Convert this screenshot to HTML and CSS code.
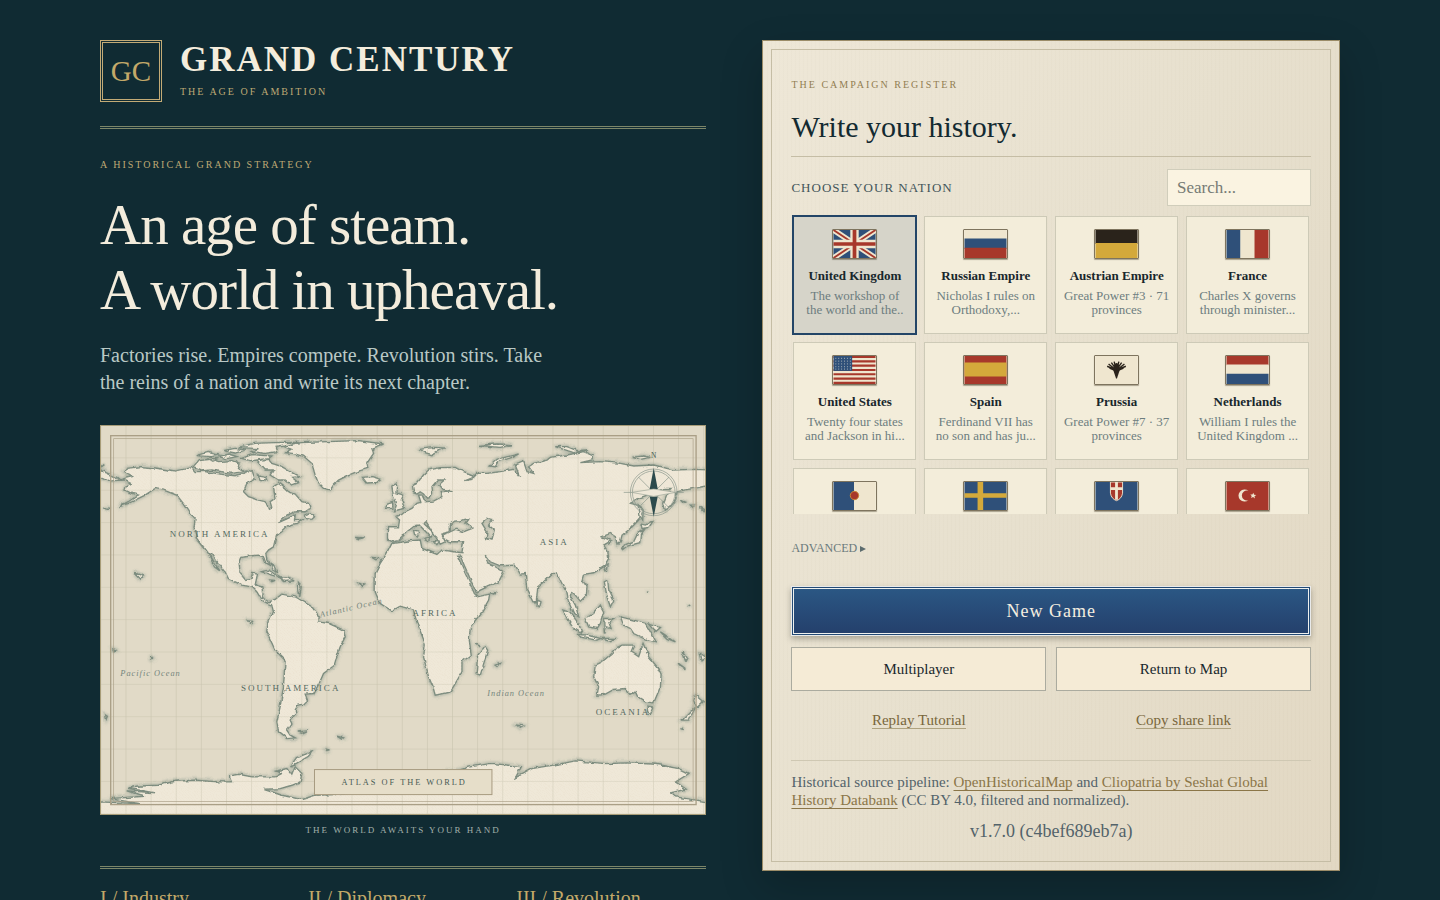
FILE: index.html
```html
<!DOCTYPE html>
<html lang="en">
<head>
<meta charset="utf-8">
<meta name="viewport" content="width=device-width, initial-scale=1">
<title>Grand Century</title>
<link rel="stylesheet" href="styles.css">
</head>
<body>
<main class="layout">
  <section class="intro">
    <header class="brand">
      <div class="monogram">GC</div>
      <div class="brand-text">
        <p class="brand-name">GRAND CENTURY</p>
        <p class="eyebrow">THE AGE OF AMBITION</p>
      </div>
    </header>
    <p class="eyebrow intro-eyebrow">A HISTORICAL GRAND STRATEGY</p>
    <h1 class="headline">An age of steam.<br>A world in upheaval.</h1>
    <p class="lede">Factories rise. Empires compete. Revolution stirs. Take<br>the reins of a nation and write its next chapter.</p>
    <figure class="atlas">
      <svg class="map" viewBox="18 18 1812 1164" role="img" aria-label="Atlas of the world">
        <defs>
          <pattern id="grid" x="19" y="18" width="75.3" height="97" patternUnits="userSpaceOnUse"><path class="grid-line" d="M75 0V97M0 97H75.3"/></pattern>
          <pattern id="hatch" width="9" height="9" patternUnits="userSpaceOnUse"><path class="hatch-line" d="M0 0L9 9"/></pattern>
          <filter id="coast" x="-2%" y="-2%" width="104%" height="104%"><feTurbulence type="fractalNoise" baseFrequency=".045" numOctaves="3" seed="4"/><feDisplacementMap in="SourceGraphic" scale="11" xChannelSelector="R" yChannelSelector="G"/></filter>
          <filter id="haze"><feGaussianBlur stdDeviation="5"/></filter>
          <g id="land">
            <path d="M85 155L100 145 138 140 180 144 240 153 290 143 300 155 330 155 380 163 420 167 448 160 455 150 472 155 480 178 455 190 445 215 460 230 490 240 510 245 520 268 530 262 525 245 540 235 535 200 550 190 570 205 580 215 600 222 620 245 640 250 645 265 630 275 600 275 575 285 550 308 572 298 600 285 598 302 622 300 610 310 590 312 575 320 560 335 545 345 540 360 535 380 520 390 512 400 515 420 522 435 513 430 505 410 490 405 470 407 440 412 432 430 435 460 450 478 468 475 472 460 487 462 480 495 500 500 505 535 520 545 540 538 560 522 600 530 625 545 650 560 672 590 670 605 700 610 745 630 750 650 735 680 728 700 718 735 685 760 672 790 655 820 630 822 637 840 625 852 608 855 600 870 602 880 585 900 590 910 575 930 585 945 600 953 575 955 550 935 545 905 555 860 565 800 570 720 540 690 515 635 520 610 535 575 530 555 515 548 500 540 485 515 470 500 440 495 400 475 390 455 370 430 350 400 343 402 365 440 374 452 358 440 340 400 325 380 305 355 297 325 300 295 285 280 265 250 245 225 210 212 180 205 165 215 150 225 130 235 100 250 70 260 100 245 130 225 110 220 90 210 95 195 110 190 90 180 70 180 110 170Z"/>
            <path d="M555 75L620 68 700 65 790 62 865 72 830 85 835 100 815 130 818 145 785 155 760 165 730 180 715 195 705 210 685 205 670 190 660 165 650 130 625 108 595 100 575 98 590 88Z"/>
            <path d="M485 122L520 118 530 130 560 140 590 158 612 170 590 172 610 188 590 195 570 180 550 180 525 165 535 150 510 150Z"/>
            <path d="M295 140L310 122 350 117 370 125 410 122 435 130 430 145 445 155 410 160 380 155 350 150 325 152Z"/>
            <path d="M305 107L340 97 370 105 350 110ZM370 110L400 102 425 110 395 116ZM385 92L420 85 450 90 420 99ZM440 115L470 104 530 108 520 116 465 122ZM430 82L480 70 540 68 610 67 570 78 540 82 545 95 510 100 470 94 490 86ZM340 117L370 115 350 124ZM490 165L510 168 515 180 495 178Z"/>
            <path d="M802 172L830 170 857 178 845 187 815 189Z"/>
            <path d="M628 285L645 278 658 290 650 298 630 295ZM500 455L520 450 555 470 540 468ZM555 473L580 475 597 482 565 484ZM525 480L540 481 530 485ZM525 430L540 440 548 455 532 444ZM118 457L145 467 137 477ZM15 150L65 172 75 180 40 184 15 172ZM25 264L45 264 35 267ZM15 138L28 138 20 142Z"/>
            <path d="M780 352L805 353 792 356ZM830 412L855 414 842 419ZM790 490L808 495 800 500ZM610 490L618 500 614 530 611 510ZM458 602L472 604 466 612ZM54 687L62 690 56 692ZM168 708L174 715 171 718ZM32 885L37 888 34 896ZM608 935L635 932 620 939ZM725 948L745 953 740 957ZM692 990L703 992 695 994ZM604 1012L650 995 640 1008 585 1040Z"/>
            <path d="M890 198L905 190 902 218 925 225 918 240 928 265 898 272 905 250 895 230ZM875 250L892 244 893 264 872 266Z"/>
            <path d="M15 1145L140 1151 45 1135 150 1128 95 1112 180 1118 100 1104 125 1098 190 1095 240 1083 300 1080 370 1085 412 1085 405 1067 430 1062 470 1070 540 1070 560 1060 542 1053 575 1045 590 1065 600 1040 620 1060 615 1085 590 1095 555 1105 505 1107 560 1125 620 1138 660 1125 745 1122 880 1090 1090 1050 1125 1040 1180 1030 1200 1030 1278 1040 1260 1073 1310 1045 1400 1030 1440 1022 1530 1030 1600 1028 1680 1032 1750 1045 1780 1060 1740 1085 1772 1107 1725 1118 1740 1130 1835 1145 1850 1200 0 1200Z"/>
            <g transform="translate(915 0)">
              <path fill-rule="evenodd" d="M-38 360L-38 320 -5 320 -2 300 -12 290 5 283 15 275 35 265 50 250 62 247 55 225 65 225 75 245 100 243 125 230 120 215 157 212 125 207 115 195 133 180 112 180 95 200 97 220 90 232 80 235 70 222 60 215 50 222 40 218 37 197 50 190 70 165 85 150 120 143 165 142 182 152 218 165 215 178 195 182 220 172 232 160 260 160 300 155 340 148 358 170 345 135 370 125 380 155 400 160 385 140 400 130 440 120 450 112 500 105 550 95 580 108 575 120 540 128 600 125 660 130 700 138 760 135 820 150 880 148 930 150 930 195 880 205 850 210 830 215 825 240 810 260 795 270 790 250 800 225 815 205 790 205 770 215 740 225 700 240 690 250 720 257 725 275 715 300 690 325 665 345 660 365 650 375 645 350 630 340 605 350 632 362 610 375 622 395 625 415 610 440 580 458 550 462 545 480 560 500 558 525 540 543 525 525 515 515 510 530 525 555 535 590 520 580 505 545 500 520 485 490 470 460 455 460 430 485 412 500 408 545 398 545 380 510 375 460 360 462 345 435 300 437 270 425 255 405 262 430 285 440 310 455 295 485 240 510 228 518 205 465 180 408 172 408 195 460 222 520 232 530 268 522 265 540 245 575 210 620 207 660 213 705 185 725 185 755 165 790 150 815 105 825 98 800 85 770 70 710 75 670 55 620 45 590 40 570 0 558 -25 572 -60 550 -75 515 -75 460 -60 430 -40 400 -25 370 -10 368 30 362 60 360 65 385 110 403 125 390 160 395 185 398 190 365 150 365 128 355 130 340 150 335 150 312 160 303 180 302 205 295 195 308 217 325 190 335 165 328 145 338 125 345 135 365 120 372 105 348 78 305 70 310 100 338 92 352 80 338 60 318 40 320 20 335 5 352 -5 362 -25 365ZM245 310L262 295 278 298 265 315 282 330 275 360 258 355 260 335Z"/>
              <path d="M270 138L290 118 355 102 335 112 295 125 285 140ZM60 88L100 82 130 84 115 92 95 104 75 98ZM235 76L290 72 335 74 300 82ZM465 80L500 80 530 92 560 90 520 98ZM695 112L730 108 750 112 720 118ZM40 330L55 333 52 348 43 343ZM72 355L88 352 85 362ZM100 362L118 362 110 374ZM412 540L422 545 418 560 410 558ZM717 255L728 270 727 300 718 285ZM722 312L735 315 760 300 745 322 725 325ZM735 325L720 345 718 368 680 378 665 390 672 375 700 365 712 340ZM612 440L620 435 618 455ZM612 485L622 480 625 510 640 540 630 560 620 530ZM270 518L288 518 280 522ZM840 240L856 246 850 250ZM870 258L880 258 874 262ZM900 262L912 268 908 272ZM740 512L744 514ZM860 560L872 555Z"/>
              <path d="M488 570L508 575 535 610 545 640 525 630 505 600ZM555 595L580 580 600 555 610 575 600 610 590 625 565 620ZM530 643L560 645 600 655 590 660 545 652ZM600 655L650 655 625 663ZM610 595L640 595 625 605 632 625 618 620 612 640ZM660 590L700 600 735 610 750 635 765 665 730 655 700 640 690 625 670 615ZM745 612L780 622 765 635ZM780 635L825 665 800 655Z"/>
              <path d="M665 675L700 675 692 695 715 710 728 670 745 710 770 740 782 765 780 800 760 848 735 845 712 830 705 815 690 825 675 805 640 808 615 822 590 825 595 800 580 770 585 735 605 725 635 700 650 682ZM740 858L758 860 750 880 742 875ZM885 825L908 845 890 862 880 842ZM885 862L865 900 845 900 870 875ZM255 680L262 690 240 765 228 760 232 710ZM285 735L300 730 292 740ZM350 915L370 918 360 924ZM225 672L240 680ZM845 695L860 712 855 722ZM832 728L855 745 845 742ZM900 700L918 712 905 722ZM840 925L850 928Z"/>
            </g>
          </g>
        </defs>
        <rect class="sea" x="15" y="15" width="1818" height="1170"/>
        <g filter="url(#coast)">
          <use href="#land" class="coast-haze" filter="url(#haze)"/>
          <use href="#land" class="land"/>
          <use href="#land" class="land-hatch"/>
        </g>
        <rect fill="url(#grid)" x="15" y="15" width="1818" height="1170"/>
        <rect class="frame" x="47" y="47" width="1755" height="1106"/>
        <rect class="frame frame-thin" x="56" y="56" width="1737" height="1088"/>
        <g transform="translate(1675 217)">
          <circle class="ring" r="70"/><circle class="ring" r="64"/>
          <path class="ring" d="M-90 0H90M-46-46L46 46M46-46L-46 46"/>
          <path class="needle" d="M0-73L12-10H-12ZM0 73L12 12H-12Z"/>
          <path class="needle-light" d="M-66 0L0-10 66 0 0 12Z"/>
          <text class="north" y="-103">N</text>
        </g>
        <g class="region">
          <text x="224" y="351">NORTH AMERICA</text><text x="438" y="811">SOUTH AMERICA</text>
          <text x="952" y="588">AFRICA</text><text x="1333" y="374">ASIA</text><text x="1501" y="884">OCEANIA</text>
        </g>
        <g class="ocean">
          <text x="76" y="767">Pacific Ocean</text><text x="1176" y="828">Indian Ocean</text>
          <text transform="translate(676 592) rotate(-13)">Atlantic Ocean</text>
        </g>
        <rect class="plate" x="658" y="1048" width="532" height="75"/>
        <text class="plate-text" x="927" y="1094">ATLAS OF THE WORLD</text>
      </svg>
      <figcaption class="caption">THE WORLD AWAITS YOUR HAND</figcaption>
    </figure>
    <ul class="pillars"><li>I / Industry</li><li>II / Diplomacy</li><li>III / Revolution</li></ul>
  </section>

  <section class="register">
    <p class="eyebrow register-eyebrow">THE CAMPAIGN REGISTER</p>
    <h2 class="register-title">Write your history.</h2>
    <div class="picker-head">
      <label for="search">CHOOSE YOUR NATION</label>
      <input id="search" class="search" type="search" placeholder="Search...">
    </div>
    <div class="nations">
      <button class="nation selected" type="button">
        <svg class="flag" viewBox="0 0 45 30"><path class="navy" d="M0 0H45V30H0Z"/><path stroke="#efe6cf" stroke-width="6" d="M0 0L45 30M45 0L0 30"/><path stroke="#a7382b" stroke-width="2" d="M0 0L45 30M45 0L0 30"/><path stroke="#efe6cf" stroke-width="9" d="M22.500 0V30M0 15H45"/><path stroke="#a7382b" stroke-width="4" d="M22.500 0V30M0 15H45"/></svg>
        <strong>United Kingdom</strong><span>The workshop of<br>the world and the..</span></button>
      <button class="nation" type="button">
        <svg class="flag" viewBox="0 0 45 30"><path class="cream" d="M0 0H45V10H0Z"/><path class="navy" d="M0 9H45V20H0Z"/><path class="red" d="M0 19H45V30H0Z"/></svg>
        <strong>Russian Empire</strong><span>Nicholas I rules on<br>Orthodoxy,...</span></button>
      <button class="nation" type="button">
        <svg class="flag" viewBox="0 0 45 30"><path class="black" d="M0 0H45V15H0Z"/><path class="gold" d="M0 14H45V30H0Z"/></svg>
        <strong>Austrian Empire</strong><span>Great Power #3 · 71<br>provinces</span></button>
      <button class="nation" type="button">
        <svg class="flag" viewBox="0 0 45 30"><path class="navy" d="M0 0H15V30H0Z"/><path class="cream" d="M15 0H30V30H15Z"/><path class="red" d="M30 0H45V30H30Z"/></svg>
        <strong>France</strong><span>Charles X governs<br>through minister...</span></button>
      <button class="nation" type="button">
        <svg class="flag" viewBox="0 0 45 30"><path class="cream" d="M0 0H45V30H0Z"/><path stroke="#a7382b" stroke-width="2.300" d="M0 1H45M0 5.700H45M0 10.300H45M0 15H45M0 19.600H45M0 24.200H45M0 28.800H45"/><path class="navy" d="M0 0H20V16H0Z"/><path stroke="#b9c0bf" stroke-dasharray="1 2.100" d="M2 2.500H19M2 5.500H19M2 8.500H19M2 11.500H19M2 14H19"/></svg>
        <strong>United States</strong><span>Twenty four states<br>and Jackson in hi...</span></button>
      <button class="nation" type="button">
        <svg class="flag" viewBox="0 0 45 30"><path class="red" d="M0 0H45V30H0Z"/><path class="gold" d="M0 7H45V22H0Z"/></svg>
        <strong>Spain</strong><span>Ferdinand VII has<br>no son and has ju...</span></button>
      <button class="nation" type="button">
        <svg class="flag" viewBox="0 0 45 30"><path class="cream" d="M0 0H45V30H0Z"/><path class="black" d="M20 10Q22.500 5 25 10L26 15 23 24H22L19 15Z"/><path fill="none" stroke="#2a231b" stroke-width="1.500" d="M22 15L12.500 11M22 15L14 8.500M22 14L17 7M22 14L20 6M23 15L32.500 11M23 15L31 8.500M23 14L28 7M23 14L25 6M22 16L15 13M23 16L30 13"/></svg>
        <strong>Prussia</strong><span>Great Power #7 · 37<br>provinces</span></button>
      <button class="nation" type="button">
        <svg class="flag" viewBox="0 0 45 30"><path class="red" d="M0 0H45V10H0Z"/><path class="cream" d="M0 9H45V20H0Z"/><path class="navy" d="M0 19H45V30H0Z"/></svg>
        <strong>Netherlands</strong><span>William I rules the<br>United Kingdom ...</span></button>
      <button class="nation" type="button" aria-label="Portugal">
        <svg class="flag" viewBox="0 0 45 30"><path class="navy" d="M0 0H22V30H0Z"/><path class="cream" d="M22 0H45V30H22Z"/><circle class="red" cx="22.500" cy="14.500" r="4.500" stroke="#c98a35"/></svg>
      </button>
      <button class="nation" type="button" aria-label="Sweden">
        <svg class="flag" viewBox="0 0 45 30"><path class="navy" d="M0 0H45V30H0Z"/><path class="gold" d="M14 0H20V30H14ZM0 12H45V17H0Z"/></svg>
      </button>
      <button class="nation" type="button" aria-label="Sardinia">
        <svg class="flag" viewBox="0 0 45 30"><path class="navy" d="M0 0H45V30H0Z"/><path class="red" stroke="#efe6cf" d="M16 0H29V12Q28 18 22.500 20Q17 18 16 12Z"/><path stroke="#efe6cf" stroke-width="3" d="M22.500 0V19M16 7H29"/></svg>
      </button>
      <button class="nation" type="button" aria-label="Ottoman Empire">
        <svg class="flag" viewBox="0 0 45 30"><path class="red" d="M0 0H45V30H0Z"/><path class="cream" d="M23.500 9.500A6.500 6.500 0 1 0 23.500 19.500A5.300 5.300 0 1 1 23.500 9.500ZM28.700 11.500L29.600 13.700 32 14 30 15.200 30.500 17.700 28.500 16.200 26.300 17.200 27 15 25.500 13.300 27.800 13.400Z"/></svg>
      </button>
    </div>
    <button class="advanced" type="button">ADVANCED <svg class="caret" viewBox="0 0 6 6" aria-hidden="true"><path d="M0 0L6 3 0 6Z"/></svg></button>
    <button class="primary" type="button">New Game</button>
    <div class="pair">
      <button class="secondary" type="button">Multiplayer</button>
      <button class="secondary" type="button">Return to Map</button>
    </div>
    <div class="pair links"><a href="#tutorial">Replay Tutorial</a><a href="#share">Copy share link</a></div>
    <footer class="credits">
      <p>Historical source pipeline: <a href="#ohm">OpenHistoricalMap</a> and <a href="#cliopatria">Cliopatria by Seshat Global<br>History Databank</a> (CC BY 4.0, filtered and normalized).</p>
      <p class="version">v1.7.0 (c4bef689eb7a)</p>
    </footer>
  </section>
</main>
</body>
</html>
```
FILE: styles.css
```css
* { box-sizing: border-box; margin: 0; }
body { height: 100vh; overflow: hidden; background: #102b33; color: #18272c; font-family: "Liberation Serif", serif; }
button, input { font: inherit; color: inherit; }
.layout { display: grid; grid-template-columns: 1.05fr 1fr; gap: 56px; align-items: start; max-width: 1320px; margin: 0 auto; padding: 40px; }
.brand { display: flex; gap: 18px; padding-bottom: 24px; border-bottom: 3px double #7c8669; }
.monogram { display: grid; place-items: center; width: 62px; height: 62px; border: 3px double #c3ab76; color: #c3a969; font-size: 29px; }
.brand-name { color: #f4eddd; font-size: 35px; font-weight: 700; line-height: 40px; letter-spacing: 2px; }
.eyebrow { color: #bfa973; font-size: 10px; line-height: 16px; letter-spacing: 2px; }
.brand .eyebrow { margin-top: 4px; }
.intro-eyebrow { margin-top: 28px; }
.headline { margin-top: 19px; color: #f3ecdc; font-size: 57px; font-weight: 400; line-height: 65px; letter-spacing: -1px; }
.lede { margin-top: 20px; color: #b9c8c5; font-size: 20px; line-height: 27px; }
.atlas { margin-top: 29px; }
.map { display: block; width: 100%; border: 1px solid #a79c78; }
.caption { padding: 7px 0 28px; color: #a3b1ab; font-size: 9px; line-height: 16px; letter-spacing: 2px; text-align: center; }
.pillars { display: grid; grid-template-columns: repeat(3, 1fr); gap: 18px; padding: 16px 0 0; border-top: 3px double #7c8669; color: #c3a969; font-size: 20px; line-height: 26px; list-style: none; }

.sea { fill: #e1dac7; }
.land { fill: #efe8d8; stroke: #7b8b7e; stroke-width: 4; }
.land-hatch { fill: url(#hatch); }
.coast-haze { fill: none; stroke: #8a9a8d; stroke-width: 10; opacity: .6; }
.hatch-line { stroke: #e2d5bd; stroke-width: 1; opacity: .5; }
.grid-line { fill: none; stroke: #8d8a70; stroke-width: 3; opacity: .28; }
.frame { fill: none; stroke: #aa9f86; stroke-width: 4; }
.frame-thin { stroke-width: 2; }
.ring { fill: none; stroke: #87948a; stroke-width: 2; }
.needle { fill: #2c4a4c; }
.needle-light { fill: #efe8d8; stroke: #9ba597; stroke-width: 2; }
.north { fill: #40594f; font-size: 22px; text-anchor: middle; }
.region { fill: #53695f; font-size: 27px; letter-spacing: 6px; }
.ocean { fill: #74857c; font-size: 25px; font-style: italic; letter-spacing: 3px; }
.plate { fill: #e6dec9; stroke: #a79b80; stroke-width: 3; }
.plate-text { fill: #465a54; font-size: 25px; letter-spacing: 6px; text-anchor: middle; }

.register { position: relative; padding: 36px 28px 28px; border: 1px solid #9b8c68; background: repeating-linear-gradient(90deg, rgba(110, 90, 50, .02) 0 1px, transparent 1px 4px), linear-gradient(115deg, #eee7d7, #e7e0ce 50%, #e2d8c3); box-shadow: 0 16px 40px rgba(0, 0, 0, .2); }
.register::before { content: ""; position: absolute; inset: 8px; border: 1px solid #c5bda5; pointer-events: none; }
.register-eyebrow { color: #927e52; }
.register-title { padding: 14px 0 9px; border-bottom: 1px solid #c5bda5; color: #132a31; font-size: 30px; font-weight: 400; line-height: 40px; }
.picker-head { display: flex; justify-content: space-between; align-items: center; padding: 12px 0 8px; color: #43555a; font-size: 13px; letter-spacing: 1px; }
.search { width: 144px; height: 37px; padding: 0 9px; border: 1px solid #d0cdbb; border-radius: 0; background: #faf3e1; font-size: 17px; outline: none; }
.search::placeholder { color: #767b75; }
.nations { display: grid; grid-template-columns: repeat(4, 1fr); grid-auto-rows: 118px; gap: 8px; height: 300px; padding: 2px; overflow-y: auto; scrollbar-width: none; }
.nation { display: flex; flex-direction: column; align-items: center; padding: 12px 4px; border: 1px solid #cdcab7; background: #f3edda; text-align: center; cursor: pointer; }
.nation.selected { border-color: #234567; outline: 1px solid #234567; background: #d6d4c9; }
.nation strong { margin-top: 8px; color: #18272c; font-size: 13px; line-height: 18px; white-space: nowrap; }
.nation span { margin-top: 4px; color: #6d7d7f; font-size: 13px; line-height: 14px; white-space: nowrap; }
.flag { flex: none; width: 45px; height: 30px; border: 1px solid #7e745e; border-radius: 1px; box-shadow: 0 1px 1px rgba(60, 50, 30, .4); }
.navy { fill: #2f5079; }
.red { fill: #a7382b; }
.gold { fill: #d4a93b; }
.cream { fill: #efe6cf; }
.black { fill: #2a231b; }
.advanced { display: block; margin-top: 25px; padding: 0; border: 0; background: none; color: #6a7a7c; font-size: 12px; line-height: 18px; cursor: pointer; }
.caret { width: 6px; height: 6px; fill: #5c6c6e; }
.primary { display: block; width: 100%; height: 50px; margin-top: 29px; border: 1px solid #e9eaea; background: linear-gradient(#2b5885, #243f6b); box-shadow: inset 0 0 0 1px #234a75, inset 0 0 0 2px #eef0ee, 0 3px 6px rgba(50, 50, 40, .35); color: #f4eee0; font-size: 18px; letter-spacing: 1px; cursor: pointer; }
.pair { display: grid; grid-template-columns: 1fr 1fr; gap: 10px; margin-top: 11px; }
.secondary { height: 44px; border: 1px solid #abab9f; background: #f5ebd6; color: #18272c; font-size: 15px; cursor: pointer; }
.links { justify-items: center; margin-top: 21px; font-size: 15px; line-height: 16px; }
.links a { color: #78663b; text-decoration: none; border-bottom: 1px solid #aea27f; }
.credits { margin-top: 31px; padding-top: 12px; border-top: 1px solid #cfc8b3; color: #53636a; font-size: 15px; line-height: 18px; }
.credits a { color: #8b7648; text-decoration: underline; text-decoration-thickness: 1px; text-underline-offset: 3px; }
.version { margin-top: 11px; font-size: 18px; line-height: 22px; text-align: center; }
```
